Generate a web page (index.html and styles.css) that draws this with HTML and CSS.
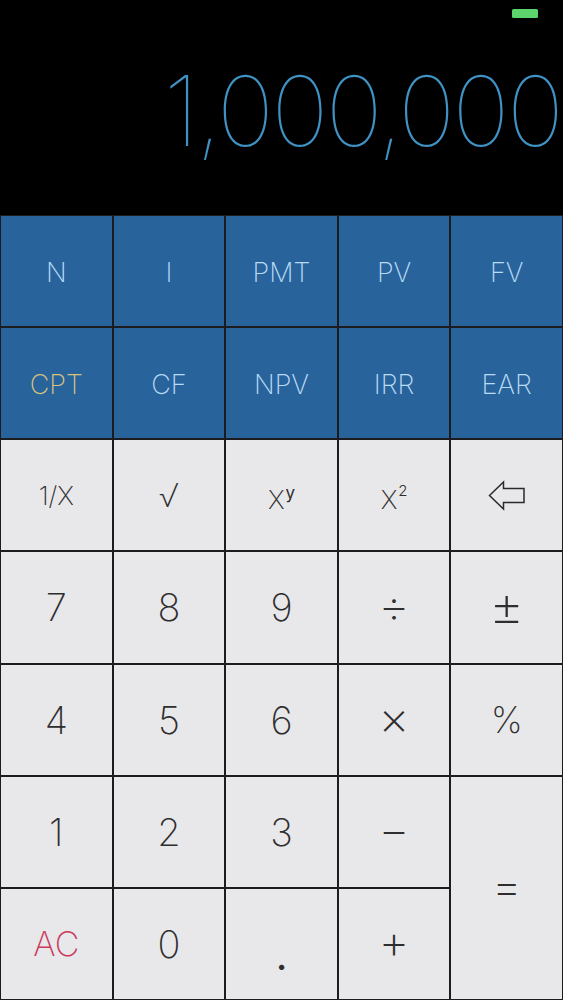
FILE: index.html
```html
<!DOCTYPE html>
<html lang="en">
<head>
<meta charset="utf-8">
<title>Financial Calculator</title>
<link rel="stylesheet" href="styles.css">
</head>
<body>
<div class="app">
  <header class="display">
    <div class="status"><span class="battery"></span></div>
    <div class="readout">1,000,000</div>
  </header>
  <main class="keys">
    <button class="key fin">N</button>
    <button class="key fin">I</button>
    <button class="key fin">PMT</button>
    <button class="key fin">PV</button>
    <button class="key fin">FV</button>

    <button class="key fin cpt">CPT</button>
    <button class="key fin">CF</button>
    <button class="key fin">NPV</button>
    <button class="key fin">IRR</button>
    <button class="key fin">EAR</button>

    <button class="key fn">1/X</button>
    <button class="key fn sqrt">√</button>
    <button class="key fn pow">X<sup>y</sup></button>
    <button class="key fn pow">X<sup class="sq">2</sup></button>
    <button class="key fn" aria-label="Backspace">
      <svg class="back" width="38" height="31" viewBox="0 0 38 31">
        <polygon points="1.5,15.5 15.5,2 15.5,8.5 36,8.5 36,22.5 15.5,22.5 15.5,29" fill="none" stroke="#2a2a2a" stroke-width="1.5" stroke-linejoin="miter"/>
      </svg>
    </button>

    <button class="key num">7</button>
    <button class="key num">8</button>
    <button class="key num">9</button>
    <button class="key op">÷</button>
    <button class="key op pm">±</button>

    <button class="key num">4</button>
    <button class="key num">5</button>
    <button class="key num">6</button>
    <button class="key op">×</button>
    <button class="key num pct">%</button>

    <button class="key num">1</button>
    <button class="key num">2</button>
    <button class="key num">3</button>
    <button class="key op">−</button>
    <button class="key op equals">=</button>

    <button class="key ac">AC</button>
    <button class="key num">0</button>
    <button class="key num dot">.</button>
    <button class="key op">+</button>
  </main>
</div>
</body>
</html>
```

FILE: styles.css
```css
html, body {
  margin: 0;
  padding: 0;
  background: #000;
}

.app {
  width: 563px;
  height: 1000px;
  display: flex;
  flex-direction: column;
  font-family: "Inter", "Helvetica Neue", "Liberation Sans", sans-serif;
}

.display {
  height: 215px;
  background: #000;
  display: flex;
  flex-direction: column;
  box-sizing: border-box;
}

.status {
  height: 20px;
  display: flex;
  justify-content: flex-end;
  padding: 9px 25px 0 0;
}

.battery {
  width: 26px;
  height: 9px;
  background: #5ad46b;
  border-radius: 1.5px;
}

.readout {
  text-align: right;
  color: #3f92c3;
  font-weight: 100;
  font-size: 97px;
  line-height: 1;
  padding: 33px 2px 0 0;
  letter-spacing: -3px;
}

.keys {
  flex: 1;
  display: grid;
  grid-template-columns: repeat(5, 1fr);
  grid-template-rows: repeat(7, 1fr);
  gap: 2px;
  padding: 1px;
  background: #1c1c1e;
}

.key {
  border: 0;
  margin: 0;
  padding: 0;
  font-family: inherit;
  display: flex;
  align-items: center;
  justify-content: center;
  background: #e8e7ea;
  color: #2e2e2e;
  font-weight: 200;
  font-size: 38px;
}

.fin {
  background: #29639c;
  color: #b9dcf6;
  font-size: 27px;
  font-weight: 200;
  padding-top: 3px;
}

.cpt {
  color: #d7c37c;
}

.fn {
  font-size: 26px;
}

.sqrt {
  font-size: 32px;
}

.pow {
  padding-top: 8px;
}

.fn sup {
  font-size: 17px;
  font-weight: 400;
  position: relative;
  top: -6px;
  margin-left: 1px;
}

.fn sup.sq {
  font-size: 15px;
  font-weight: 300;
  top: -9px;
}

.op {
  font-size: 48px;
  padding-bottom: 4px;
}

.pm {
  font-size: 54px;
  padding-bottom: 2px;
}

.pct {
  font-size: 36px;
}

.equals {
  grid-row: span 2;
}

.ac {
  color: #cb3b5c;
  font-size: 34px;
}

.dot {
  font-weight: 700;
  font-size: 32px;
  padding-top: 30px;
}

.back {
  display: block;
}
```
